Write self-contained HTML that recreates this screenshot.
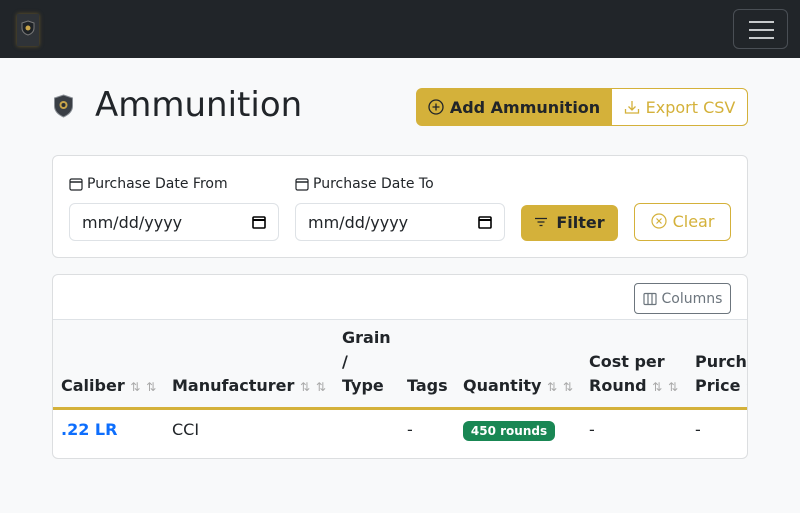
<!DOCTYPE html>
<html><head><style>
*{box-sizing:border-box;margin:0;padding:0}
body{width:800px;height:513px;overflow:hidden;background:#f8f9fa;font-family:"DejaVu Sans","Liberation Sans",sans-serif;color:#212529;position:relative}
.abs{position:absolute}
.nav{left:0;top:0;width:800px;height:58px;background:#212529}
.tog{left:733px;top:9px;width:55px;height:40px;border:1px solid #4a4f55;border-radius:6px}
.tog i{position:absolute;left:15px;width:25px;height:2px;background:#c8cacc}
.btn{position:absolute;display:flex;align-items:center;justify-content:center;border-radius:6px;font-size:16px}
.card{position:absolute;background:#fff;border:1px solid #dcdee0;border-radius:6px}
.inp{position:absolute;height:38px;border:1px solid #dee2e6;border-radius:6px;background:#fff;font-size:16px;padding:0 12px;display:flex;align-items:center;justify-content:space-between}
.lbl{position:absolute;font-size:14px;display:flex;align-items:center;gap:4px}
.th{position:absolute;font-weight:bold;font-size:16px;line-height:24px}
.s{color:#aaa;font-size:12px;font-weight:normal;letter-spacing:1px}
</style></head><body>
<div class="abs nav"></div>
<div class="abs" style="left:17px;top:14px;width:22px;height:32px;background:#2f3338;box-shadow:0 0 4px #6b5a2a"><svg width="22" height="32"><path d="M11 7l6 2v5c0 4-3 6-6 7-3-1-6-3-6-7V9z" fill="#1e2226" stroke="#777"/><circle cx="11" cy="14" r="2.5" fill="#c9a54a"/></svg></div>
<div class="abs tog"><i style="top:11px"></i><i style="top:19px"></i><i style="top:27px"></i></div>

<svg class="abs" style="left:53px;top:94px" width="21" height="24"><path d="M10.5 1l9 3v8c0 6-4.5 9-9 11-4.5-2-9-5-9-11V4z" fill="#3a3f45" stroke="#8a8f95"/><circle cx="10.5" cy="11" r="4" fill="#c9a54a"/><circle cx="10.5" cy="11" r="2" fill="#2a2e33"/></svg>
<div class="abs" style="left:95px;top:83px;font-size:34px;line-height:44px">Ammunition</div>

<div class="btn" style="left:416px;top:88px;width:196px;height:38px;background:#d4b13a;border-radius:6px 0 0 6px;font-weight:bold;gap:6px"><svg width="16" height="16"><circle cx="8" cy="8" r="7" fill="none" stroke="#212529" stroke-width="1.3"/><path d="M8 4.5v7M4.5 8h7" stroke="#212529" stroke-width="1.3"/></svg>Add Ammunition</div>
<div class="btn" style="left:611px;top:88px;width:137px;height:38px;border:1px solid #d4b13a;border-radius:0 6px 6px 0;color:#d4b13a;gap:6px;background:#fff"><svg width="16" height="16"><path d="M8 2v9M4.5 7.5L8 11l3.5-3.5M1.5 10v4h13v-4" fill="none" stroke="#d4b13a" stroke-width="1.3"/></svg>Export CSV</div>

<div class="card" style="left:52px;top:155px;width:696px;height:103px"></div>
<div class="lbl" style="left:69px;top:176px"><svg width="14" height="14"><rect x="1" y="2" width="12" height="11" rx="1.5" fill="none" stroke="#212529" stroke-width="1.2"/><path d="M1 5h12" stroke="#212529" stroke-width="1.5"/></svg>Purchase Date From</div>
<div class="lbl" style="left:295px;top:176px"><svg width="14" height="14"><rect x="1" y="2" width="12" height="11" rx="1.5" fill="none" stroke="#212529" stroke-width="1.2"/><path d="M1 5h12" stroke="#212529" stroke-width="1.5"/></svg>Purchase Date To</div>
<div class="inp" style="left:69px;top:203px;width:210px">mm/dd/yyyy<svg width="14" height="14"><rect x="1" y="2" width="12" height="11" rx="1" fill="none" stroke="#000" stroke-width="1.6"/><path d="M1 5h12" stroke="#000" stroke-width="2"/></svg></div>
<div class="inp" style="left:295px;top:203px;width:210px">mm/dd/yyyy<svg width="14" height="14"><rect x="1" y="2" width="12" height="11" rx="1" fill="none" stroke="#000" stroke-width="1.6"/><path d="M1 5h12" stroke="#000" stroke-width="2"/></svg></div>
<div class="btn" style="left:521px;top:205px;width:97px;height:36px;background:#d4b13a;font-weight:bold;gap:8px;padding-bottom:2px"><svg width="14" height="10"><path d="M1 1.5h12M3.5 5h7M5.5 8.5h3" stroke="#212529" stroke-width="1.3"/></svg>Filter</div>
<div class="btn" style="left:634px;top:203px;width:97px;height:38px;border:1px solid #d4b13a;color:#d4b13a;gap:6px;padding-bottom:2px"><svg width="16" height="16"><circle cx="8" cy="8" r="7" fill="none" stroke="#d4b13a" stroke-width="1.2"/><path d="M5.5 5.5l5 5M10.5 5.5l-5 5" stroke="#d4b13a" stroke-width="1.2"/></svg>Clear</div>

<div class="card" style="left:52px;top:274px;width:696px;height:185px;overflow:hidden">
<div class="abs" style="left:0;top:44px;width:696px;height:89px;background:#f8f9fa;border-top:1px solid #dee2e6"></div>
<div class="abs" style="left:0;top:132px;width:696px;height:3px;background:#d4b13a"></div>
</div>
<div class="btn" style="left:634px;top:283px;width:97px;height:31px;border:1px solid #6c757d;color:#6c757d;font-size:14px;gap:5px;border-radius:4px;background:#fff"><svg width="14" height="14"><rect x="1" y="1.5" width="12" height="11" rx="1" fill="none" stroke="#6c757d" stroke-width="1.2"/><path d="M5 1.5v11M9 1.5v11" stroke="#6c757d" stroke-width="1.2"/></svg>Columns</div>

<div class="th" style="left:61px;top:374px">Caliber <span class="s">⇅ ⇅</span></div>
<div class="th" style="left:172px;top:374px">Manufacturer <span class="s">⇅ ⇅</span></div>
<div class="th" style="left:342px;top:326px">Grain<br>/<br>Type</div>
<div class="th" style="left:407px;top:374px">Tags</div>
<div class="th" style="left:463px;top:374px">Quantity <span class="s">⇅ ⇅</span></div>
<div class="th" style="left:589px;top:350px">Cost per<br>Round <span class="s">⇅ ⇅</span></div>
<div class="th" style="left:695px;top:350px;width:52px;overflow:hidden;white-space:nowrap">Purchase<br>Price <span class="s">⇅</span></div>

<div class="abs" style="left:61px;top:420px;font-size:16px;font-weight:bold;color:#0d6efd">.22 LR</div>
<div class="abs" style="left:172px;top:420px;font-size:16px">CCI</div>
<div class="abs" style="left:407px;top:420px;font-size:16px">-</div>
<div class="abs" style="left:463px;top:421px;width:92px;height:20px;background:#198754;color:#fff;border-radius:6px;font-size:12px;font-weight:bold;display:flex;align-items:center;justify-content:center">450 rounds</div>
<div class="abs" style="left:589px;top:420px;font-size:16px">-</div>
<div class="abs" style="left:695px;top:420px;font-size:16px">-</div>
</body></html>
